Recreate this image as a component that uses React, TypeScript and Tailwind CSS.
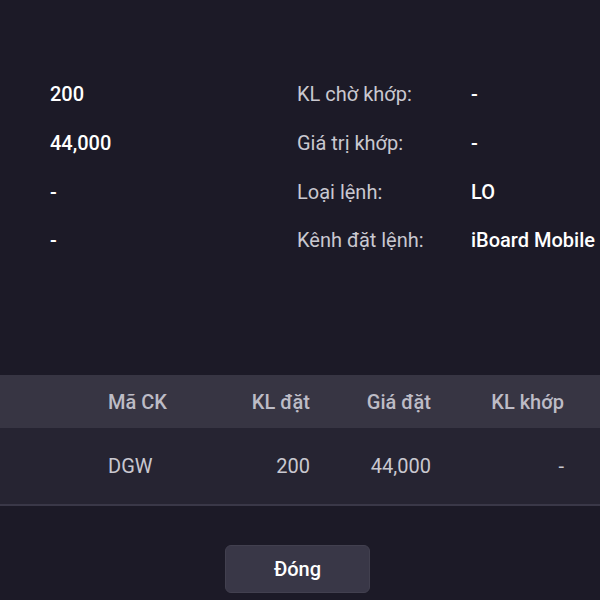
import React from "react";

const left = ["200", "44,000", "-", "-"];
const right: [string, string][] = [
  ["KL chờ khớp:", "-"],
  ["Giá trị khớp:", "-"],
  ["Loại lệnh:", "LO"],
  ["Kênh đặt lệnh:", "iBoard Mobile"],
];

export default function App() {
  return (
    <div
      className="w-[600px] h-[600px] overflow-hidden bg-[#1c1a27] flex flex-col"
      style={{ fontFamily: "Roboto, 'Noto Sans', sans-serif" }}
    >
      <div className="pt-[70px] h-[375px] flex">
        <div className="w-[297px] pl-[50px] flex flex-col">
          {left.map((v, i) => (
            <div key={i} className="h-[48.7px] flex items-center text-[20px] font-medium text-white">
              {v}
            </div>
          ))}
        </div>
        <div className="flex flex-col">
          {right.map(([l, v], i) => (
            <div key={i} className="h-[48.7px] flex items-center text-[20px]">
              <span className="w-[174px] text-[#c9c8d0]">{l}</span>
              <span className="text-white font-medium whitespace-nowrap">{v}</span>
            </div>
          ))}
        </div>
      </div>
      <div>
        <div className="h-[53px] bg-[#373543] flex items-center text-[20px] font-medium text-[#bdbcc6]">
          <div className="w-[108px]" />
          <div className="w-[100px]">Mã CK</div>
          <div className="w-[102px] text-right">KL đặt</div>
          <div className="w-[121px] text-right">Giá đặt</div>
          <div className="w-[133px] text-right">KL khớp</div>
        </div>
        <div className="h-[78px] bg-[#262432] border-b-2 border-[#3a3848] flex items-center text-[20px] text-[#c9c8d0]">
          <div className="w-[108px]" />
          <div className="w-[100px]">DGW</div>
          <div className="w-[102px] text-right">200</div>
          <div className="w-[121px] text-right">44,000</div>
          <div className="w-[133px] text-right">-</div>
        </div>
      </div>
      <div className="flex justify-center mt-[39px]">
        <button className="ml-[-5px] w-[145px] h-[48px] rounded-[6px] bg-[#393747] border border-[#42404f] text-white text-[20px] font-medium">
          Đóng
        </button>
      </div>
    </div>
  );
}
